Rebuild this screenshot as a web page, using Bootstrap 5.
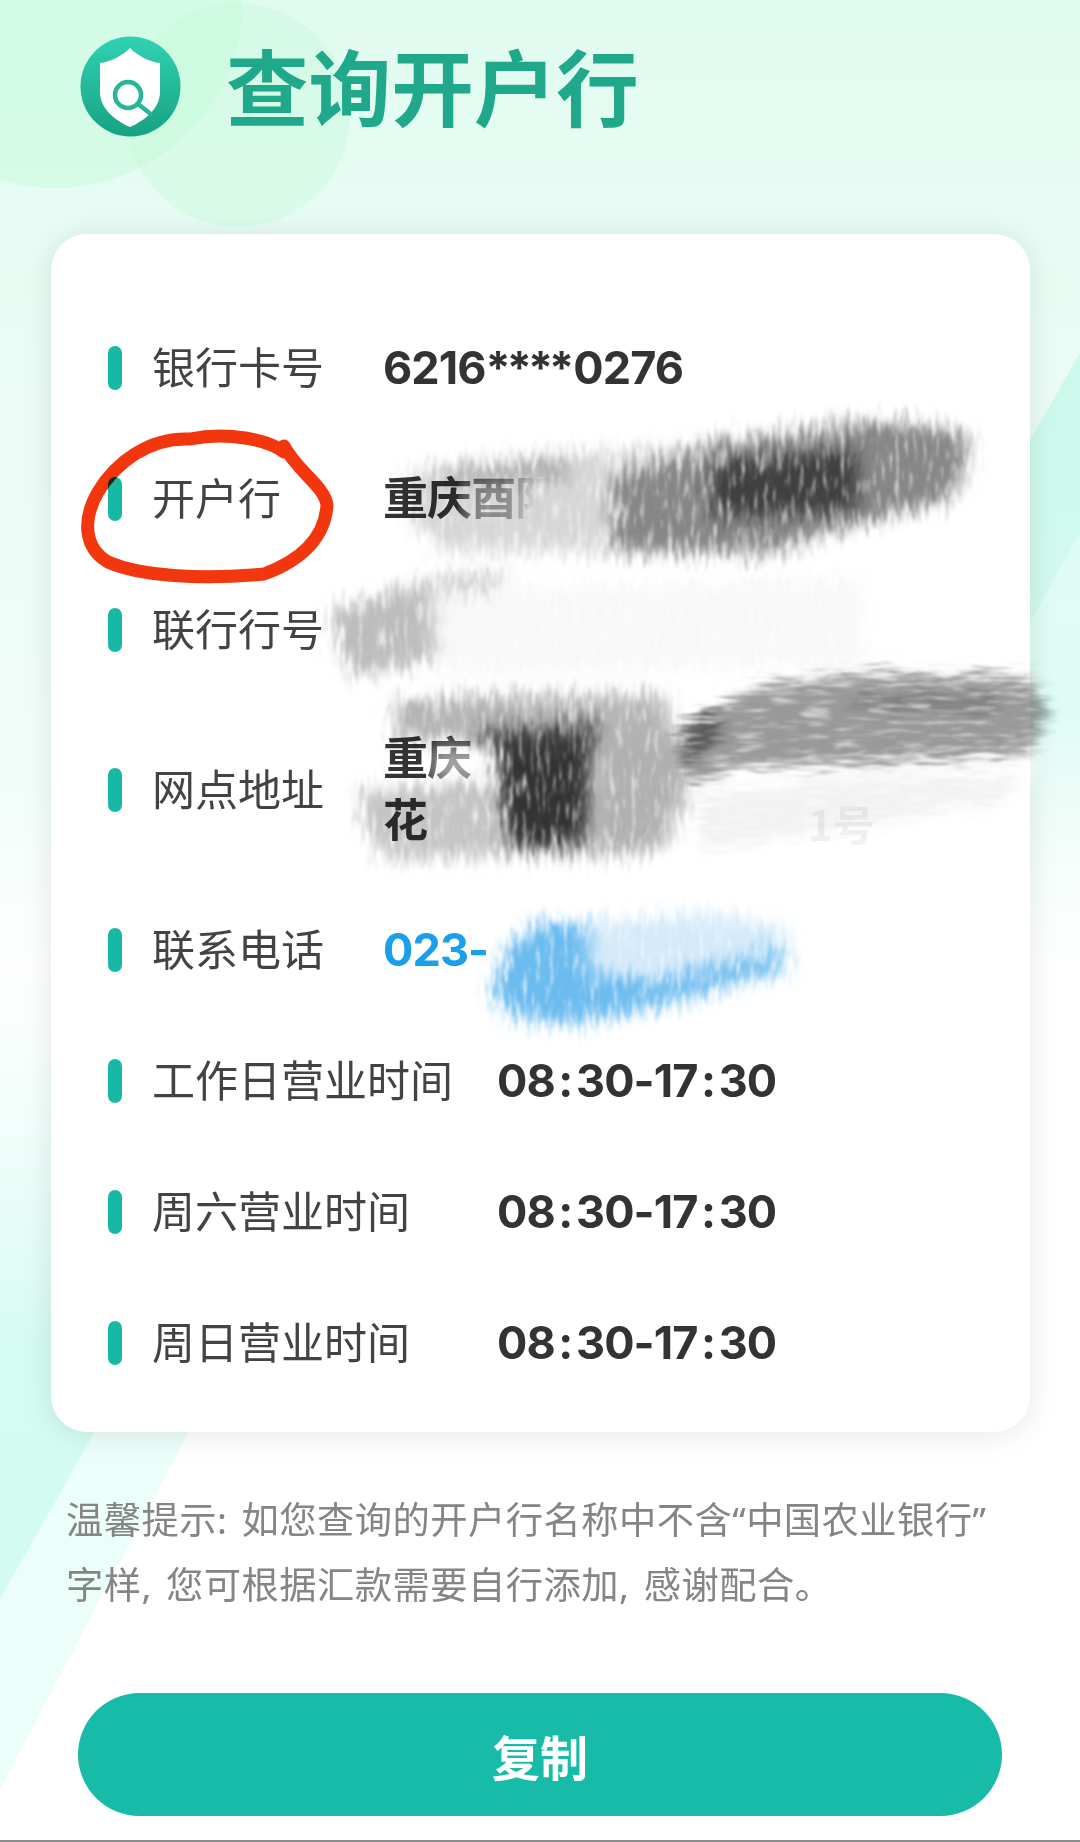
<!DOCTYPE html>
<html lang="zh-CN">
<head>
<meta charset="utf-8">
<title>查询开户行</title>
<link href="https://cdn.jsdelivr.net/npm/bootstrap@5.3.0/dist/css/bootstrap.min.css" rel="stylesheet">
<style>
html,body{margin:0;background:#fff}
body{font-family:"Noto Sans","Noto Sans CJK SC",sans-serif;width:1080px;height:1842px;overflow:hidden}
.screen{position:relative;width:1080px;height:1842px;overflow:hidden;border-bottom:2px solid #8c8c8c}
.deco{position:absolute;left:0;top:0;width:1080px;height:1842px;pointer-events:none}
.deco-wash{z-index:5}
.deco-ink{z-index:6;mix-blend-mode:multiply}
.head-wrap{position:relative;z-index:1;height:234px;padding:36px 0 0 80px;gap:45px}
.head-title{font-size:82.6px;font-weight:700;color:#1fa98a;line-height:101px;font-family:"Noto Sans CJK SC",sans-serif;margin-top:-2px}
.info-panel{position:relative;z-index:1;margin-left:51px;width:979px;padding:68px 0 24px;background:#fff;border-radius:36px;box-shadow:0 2px 30px rgba(0,0,0,.1)}
.info-row{height:131px;color:#3d3d3d}
.info-row.tall{height:189px}
.tick{flex:none;width:14px;height:44px;margin:0 30px 0 57px;border-radius:7px;background:#17b8a5}
.lab{flex:none;font-size:43px;color:#434343;line-height:1.2}
.lab-s{width:231px}
.lab-l{width:345px}
.val{font-family:Inter,"Noto Sans CJK SC",sans-serif;font-size:45px;font-weight:650;color:#333;line-height:62px;letter-spacing:-.9px}
.val.blue{color:#1a9fea}
.stars{letter-spacing:-4px;margin-right:3px}
.colon{margin:0 3.5px}
.tip-text{position:relative;z-index:1;margin:55px 0 0 66px;width:980px;font-size:37.3px;line-height:65px;color:#858585;letter-spacing:.45px;word-spacing:4px}
.copy-btn{position:relative;z-index:1;display:block;margin:76px 0 0 78px;width:924px;height:123px;border-radius:62px;background:#17bba7;border:0;color:#fff;font-size:48px;font-weight:700;font-family:"Noto Sans CJK SC",sans-serif;padding:0}
.copy-btn:hover{background:#17bba7;color:#fff}
</style>
</head>
<body>
<div class="screen">
<svg class="deco" viewBox="0 0 1080 1842" aria-hidden="true">
  <defs>
    <linearGradient id="bgG" x1="0" y1="0" x2="0" y2="1"><stop offset="0" stop-color="#e0fbef"/><stop offset=".12" stop-color="#e7fcf4"/><stop offset=".42" stop-color="#f1fdf9"/><stop offset=".53" stop-color="#fff"/></linearGradient>
    <linearGradient id="rA" gradientUnits="userSpaceOnUse" x1="0" y1="353" x2="0" y2="950"><stop offset="0" stop-color="#ccf9ec"/><stop offset=".6" stop-color="#d6faf1"/><stop offset="1" stop-color="#fff" stop-opacity="0"/></linearGradient>
    <linearGradient id="rB" gradientUnits="userSpaceOnUse" x1="0" y1="532" x2="0" y2="950"><stop offset="0" stop-color="#e6fdf8" stop-opacity=".6"/><stop offset="1" stop-color="#fff" stop-opacity="0"/></linearGradient>
    <linearGradient id="lA" x1="0" y1="0" x2="0" y2="1"><stop offset="0" stop-color="#e9fdf7" stop-opacity="0"/><stop offset=".6" stop-color="#d6fbf2"/><stop offset="1" stop-color="#d3fbf2"/></linearGradient>
  </defs>
  <rect width="1080" height="1842" fill="url(#bgG)"/>
  <circle cx="55" cy="0" r="188" fill="#c4fad9" opacity=".48"/>
  <circle cx="238" cy="115" r="112" fill="#c4fad9" opacity=".38"/>
  <polygon points="1080,353 1030,440 1030,950 1080,950" fill="url(#rA)"/>
  <polygon points="1080,532 1030,623 1030,950 1080,950" fill="url(#rB)"/>
  <polygon points="187,1435 0,1789 0,1400 187,1400" fill="#ecfefa"/>
  <polygon points="93,1435 0,1599 0,950 93,950" fill="url(#lA)"/>
</svg>

<div class="head-wrap d-flex align-items-start">
  <svg width="101" height="101" viewBox="0 0 101 101" aria-hidden="true">
    <defs><linearGradient id="lg" x1="0" y1="0" x2="0" y2="1"><stop offset="0" stop-color="#30d2b2"/><stop offset="1" stop-color="#17a281"/></linearGradient></defs>
    <circle cx="50.5" cy="50.5" r="50" fill="url(#lg)"/>
    <path d="M50 12C58 20 70 26 80 27V56C80 72 66 84 50 91C34 84 20 72 20 56V27C30 26 42 20 50 12Z" fill="#fff"/>
    <circle cx="48" cy="59" r="13" fill="none" stroke="#27b699" stroke-width="4.5"/>
    <path d="M58 68L72 79" stroke="#27b699" stroke-width="4.5"/>
  </svg>
  <div class="head-title">查询开户行</div>
</div>

<div class="info-panel">
  <div class="info-row d-flex align-items-center"><span class="tick"></span><span class="lab lab-s">银行卡号</span><span class="val">6216<span class="stars">****</span>0276</span></div>
  <div class="info-row d-flex align-items-center"><span class="tick"></span><span class="lab lab-s">开户行</span><span class="val">重庆酉阳</span></div>
  <div class="info-row d-flex align-items-center"><span class="tick"></span><span class="lab lab-s">联行行号</span><span class="val"></span></div>
  <div class="info-row tall d-flex align-items-center"><span class="tick"></span><span class="lab lab-s">网点地址</span><span class="val">重庆<br>花</span></div>
  <div class="info-row d-flex align-items-center"><span class="tick"></span><span class="lab lab-s">联系电话</span><span class="val blue">023-</span></div>
  <div class="info-row d-flex align-items-center"><span class="tick"></span><span class="lab lab-l">工作日营业时间</span><span class="val">08<span class="colon">:</span>30-17<span class="colon">:</span>30</span></div>
  <div class="info-row d-flex align-items-center"><span class="tick"></span><span class="lab lab-l">周六营业时间</span><span class="val">08<span class="colon">:</span>30-17<span class="colon">:</span>30</span></div>
  <div class="info-row d-flex align-items-center"><span class="tick"></span><span class="lab lab-l">周日营业时间</span><span class="val">08<span class="colon">:</span>30-17<span class="colon">:</span>30</span></div>
</div>

<p class="tip-text mb-0">温馨提示: 如您查询的开户行名称中不含“中国农业银行”<br>字样, 您可根据汇款需要自行添加, 感谢配合。</p>
<button type="button" class="btn copy-btn">复制</button>

<svg class="deco deco-wash" viewBox="0 0 1080 1842" aria-hidden="true">
  <defs>
    <filter id="soft" x="-10%" y="-20%" width="120%" height="140%"><feGaussianBlur stdDeviation="9"/></filter>
  </defs>
  <path d="M520 470L690 440 860 420 960 430 960 500 760 550 520 552Z" fill="#fff" filter="url(#soft)"/>
  <path d="M465 480L530 470 530 550 465 550Z" fill="#fff" opacity=".55" filter="url(#soft)"/>
  <path d="M440 578L860 572 860 675 440 676Z" fill="#fff" filter="url(#soft)"/>
  <path d="M480 705L670 700 1030 680 1030 780 880 830 860 845 480 855Z" fill="#fff" filter="url(#soft)"/>
  <path d="M432 745L480 745 480 785 432 785Z" fill="#fff" opacity=".55" filter="url(#soft)"/>
  <path d="M500 930L620 915 785 925 785 970 650 1015 500 1022Z" fill="#fff" filter="url(#soft)"/>
  <text x="808" y="841" font-size="42" font-weight="700" fill="#f1f1f1" font-family="Noto Sans CJK SC">1号</text>
</svg>

<svg class="deco deco-ink" viewBox="0 0 1080 1842" aria-hidden="true">
  <defs>
    <filter id="brV" x="-20%" y="-30%" width="140%" height="160%" color-interpolation-filters="sRGB">
      <feGaussianBlur in="SourceGraphic" stdDeviation="8" result="s"/>
      <feTurbulence type="fractalNoise" baseFrequency="0.22 0.04" numOctaves="3" seed="4" result="n"/>
      <feDisplacementMap in="s" in2="n" scale="34" xChannelSelector="R" yChannelSelector="G" result="d"/>
      <feColorMatrix in="n" type="matrix" values="0 0 0 0 0 0 0 0 0 0 0 0 0 0 0 2 0 0 0 .05" result="m"/>
      <feComposite in="d" in2="m" operator="in" result="g"/>
      <feGaussianBlur in="g" stdDeviation=".9"/>
    </filter>
    <filter id="brH" x="-20%" y="-30%" width="140%" height="160%" color-interpolation-filters="sRGB">
      <feGaussianBlur in="SourceGraphic" stdDeviation="6" result="s"/>
      <feTurbulence type="fractalNoise" baseFrequency="0.03 0.24" numOctaves="3" seed="9" result="n"/>
      <feDisplacementMap in="s" in2="n" scale="34" xChannelSelector="R" yChannelSelector="G" result="d"/>
      <feColorMatrix in="n" type="matrix" values="0 0 0 0 0 0 0 0 0 0 0 0 0 0 0 2 0 0 0 .05" result="m"/>
      <feComposite in="d" in2="m" operator="in" result="g"/>
      <feGaussianBlur in="g" stdDeviation=".9"/>
    </filter>
  </defs>
  <g filter="url(#brV)">
    <path d="M405 474L570 456 683 445 862 420 960 430 972 457 948 502 850 526 770 552 445 550 412 520Z" fill="#d6d6d6"/>
    <path d="M615 480L703 448 870 422 960 432 970 458 948 500 850 526 770 552 615 552Z" fill="#868686"/>
    <path d="M440 468L570 456 570 478 440 482Z" fill="#a8a8a8"/>
    <path d="M715 462L860 452 860 510 715 520Z" fill="#404040"/>
  </g>
  <g filter="url(#brV)">
    <path d="M332 612L440 578 510 574 490 592 430 660 352 676 338 640Z" fill="#bcbcbc"/>
    <path d="M430 590L860 578 864 665 440 674Z" fill="#f8f8f8"/>
  </g>
  <g filter="url(#brV)">
    <path d="M395 702L500 696 665 696 676 745 500 740 400 742Z" fill="#b4b4b4"/>
    <path d="M362 790L500 780 640 790 640 852 385 858 362 820Z" fill="#c4c4c4"/>
    <path d="M600 740L690 735 690 790 660 850 600 856Z" fill="#b0b0b0"/>
    <path d="M500 738L596 732 586 846 512 846 500 780Z" fill="#333"/>
    <path d="M480 730L600 724 600 745 480 748Z" fill="#444"/>
  </g>
  <g filter="url(#brH)">
    <path d="M680 728L760 686 860 674 1028 676 1050 712 1028 754 860 764 740 766 694 784 676 766Z" fill="#999"/>
    <path d="M682 726L722 704 722 740 688 764Z" fill="#5c5c5c"/>
    <path d="M860 696L1000 698 1000 710 860 706Z" fill="#777"/>
    <path d="M700 796L860 776 1020 776 1006 800 860 826 700 850Z" fill="#f2f2f2"/>
  </g>
  <g filter="url(#brV)">
    <path d="M590 922L700 914 785 926 790 970 590 995Z" fill="#d4eafa"/>
    <path d="M505 950L540 922 590 925 590 972 650 982 785 950 785 970 660 1006 570 1024 505 1014 495 990Z" fill="#6bbbef"/>
  </g>
  <path d="M284 452C268 440 228 431 190 439C150 437 116 462 98 492C82 520 84 548 108 562C140 576 200 580 264 574C302 560 325 537 327 505C325 487 298 472 284 446" fill="none" stroke="#f2370f" stroke-width="13" stroke-linecap="round" stroke-linejoin="round"/>
</svg>
</div>
</body>
</html>
